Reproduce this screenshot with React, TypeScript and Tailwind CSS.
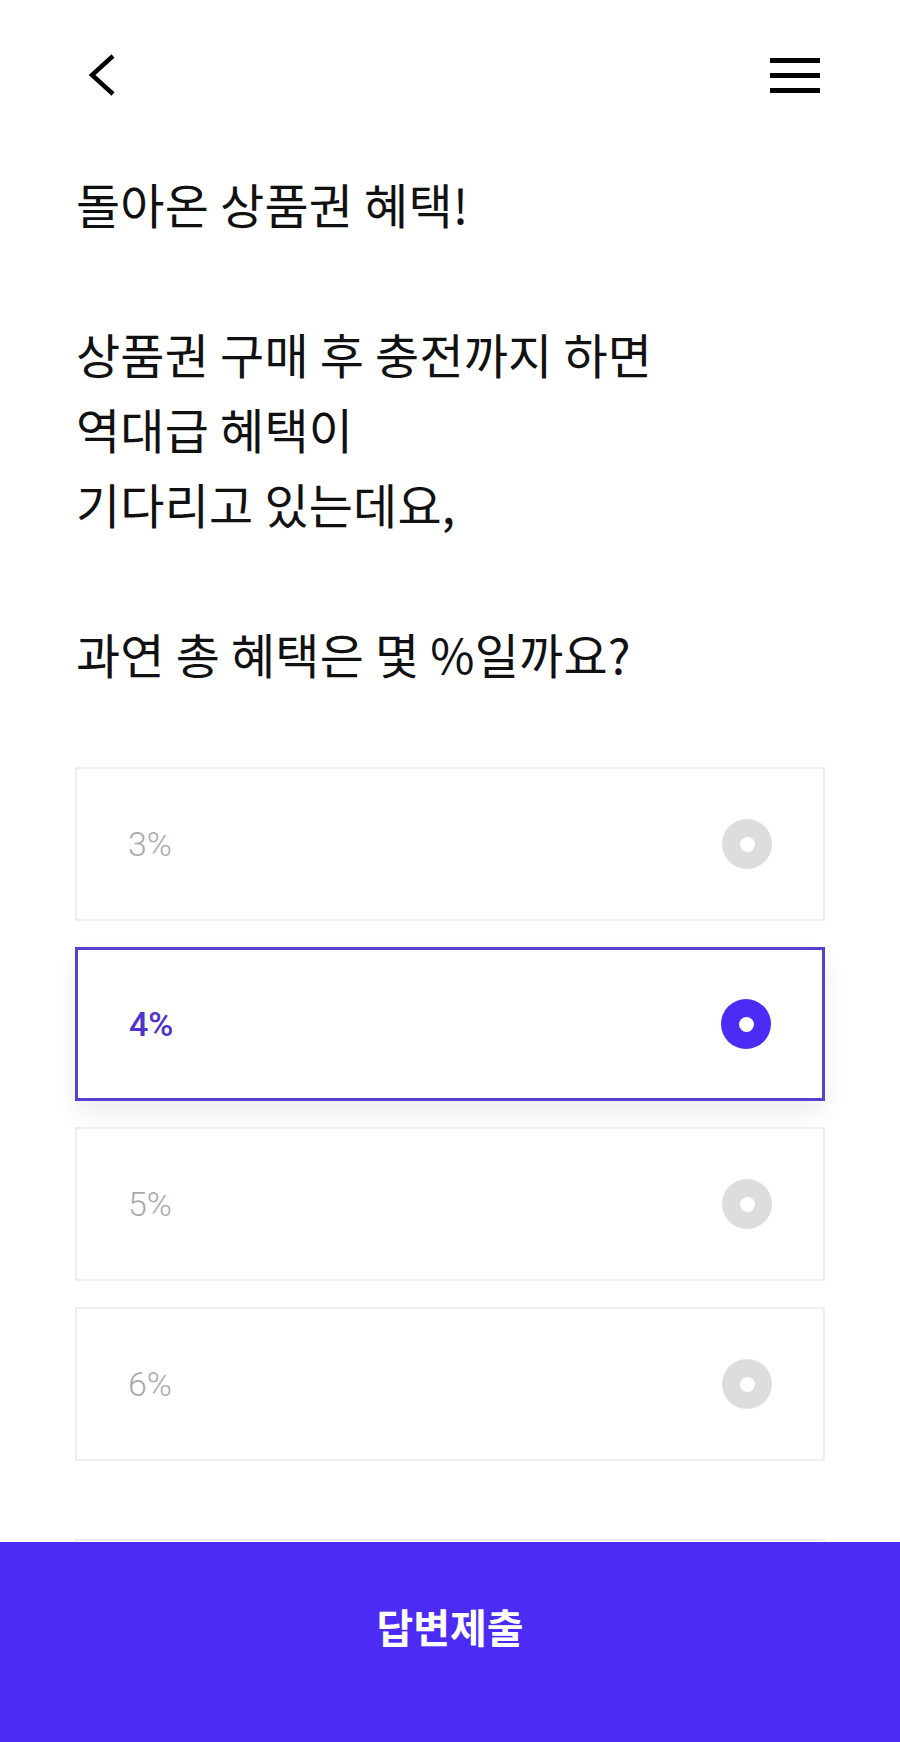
import { useState } from 'react';

const lines = [
  '돌아온 상품권 혜택!',
  '',
  '상품권 구매 후 충전까지 하면',
  '역대급 혜택이',
  '기다리고 있는데요,',
  '',
  '과연 총 혜택은 몇 %일까요?',
];

const options = ['3%', '4%', '5%', '6%'];

function Radio({ on }: { on: boolean }) {
  return (
    <span
      className={`flex h-[50px] w-[50px] items-center justify-center rounded-full ${
        on ? 'bg-[#4c2cf4]' : 'bg-[#dddddd]'
      }`}
    >
      <span className="h-[15px] w-[15px] rounded-full bg-white" />
    </span>
  );
}

export default function App() {
  const [selected, setSelected] = useState(1);

  return (
    <div
      className="relative h-[1742px] w-[900px] overflow-hidden bg-white text-[#111111]"
      style={{ fontFamily: '"Noto Sans CJK KR", "Noto Sans", sans-serif' }}
    >
      {/* 상단 바 */}
      <header className="flex h-[150px] items-center justify-between px-[80px]">
        <button className="block h-[48px] w-[40px]" aria-label="뒤로">
          <svg width="40" height="48" viewBox="0 0 40 48" fill="none">
            <path d="M33 5 L12 24 L33 43" stroke="#000" strokeWidth="4.5" />
          </svg>
        </button>
        <button className="flex w-[50px] flex-col gap-[10px]" aria-label="메뉴">
          <span className="h-[5px] w-full bg-black" />
          <span className="h-[5px] w-full bg-black" />
          <span className="h-[5px] w-full bg-black" />
        </button>
      </header>

      <div className="px-[75px]">
        {/* 질문 */}
        <div className="mt-[16px] pl-px text-[48px] leading-[75px] tracking-[0.2px]">
          {lines.map((l, i) => (
            <div key={i} className="h-[75px] whitespace-nowrap">
              {l}
            </div>
          ))}
        </div>

        {/* 보기 */}
        <div className="mt-[76px] flex flex-col gap-[26px]">
          {options.map((o, i) => {
            const on = selected === i;
            return (
              <button
                key={o}
                onClick={() => setSelected(i)}
                className={`flex h-[154px] w-full items-center justify-between bg-white px-[51px] text-left ${
                  on
                    ? 'border-[3px] border-[#5a40cf] shadow-[0_12px_22px_rgba(0,0,0,0.07)]'
                    : 'border-2 border-[#eeeeee]'
                }`}
              >
                <span
                  className={`text-[34px] leading-none ${
                    on ? 'font-medium text-[#4b33cc]' : 'font-light text-[#aaaaaa]'
                  }`}
                  style={{ fontFamily: 'Roboto, "Noto Sans", sans-serif' }}
                >
                  {o}
                </span>
                <Radio on={on} />
              </button>
            );
          })}
        </div>

        <div className="mt-[78px] h-[154px] border-2 border-[#eeeeee]" />
      </div>

      {/* 하단 버튼 */}
      <button className="absolute bottom-0 left-0 flex h-[200px] w-full items-start justify-center bg-[#4c2cf4] pt-[58px] text-[40px] font-bold leading-[52px] text-white">
        답변제출
      </button>
    </div>
  );
}
